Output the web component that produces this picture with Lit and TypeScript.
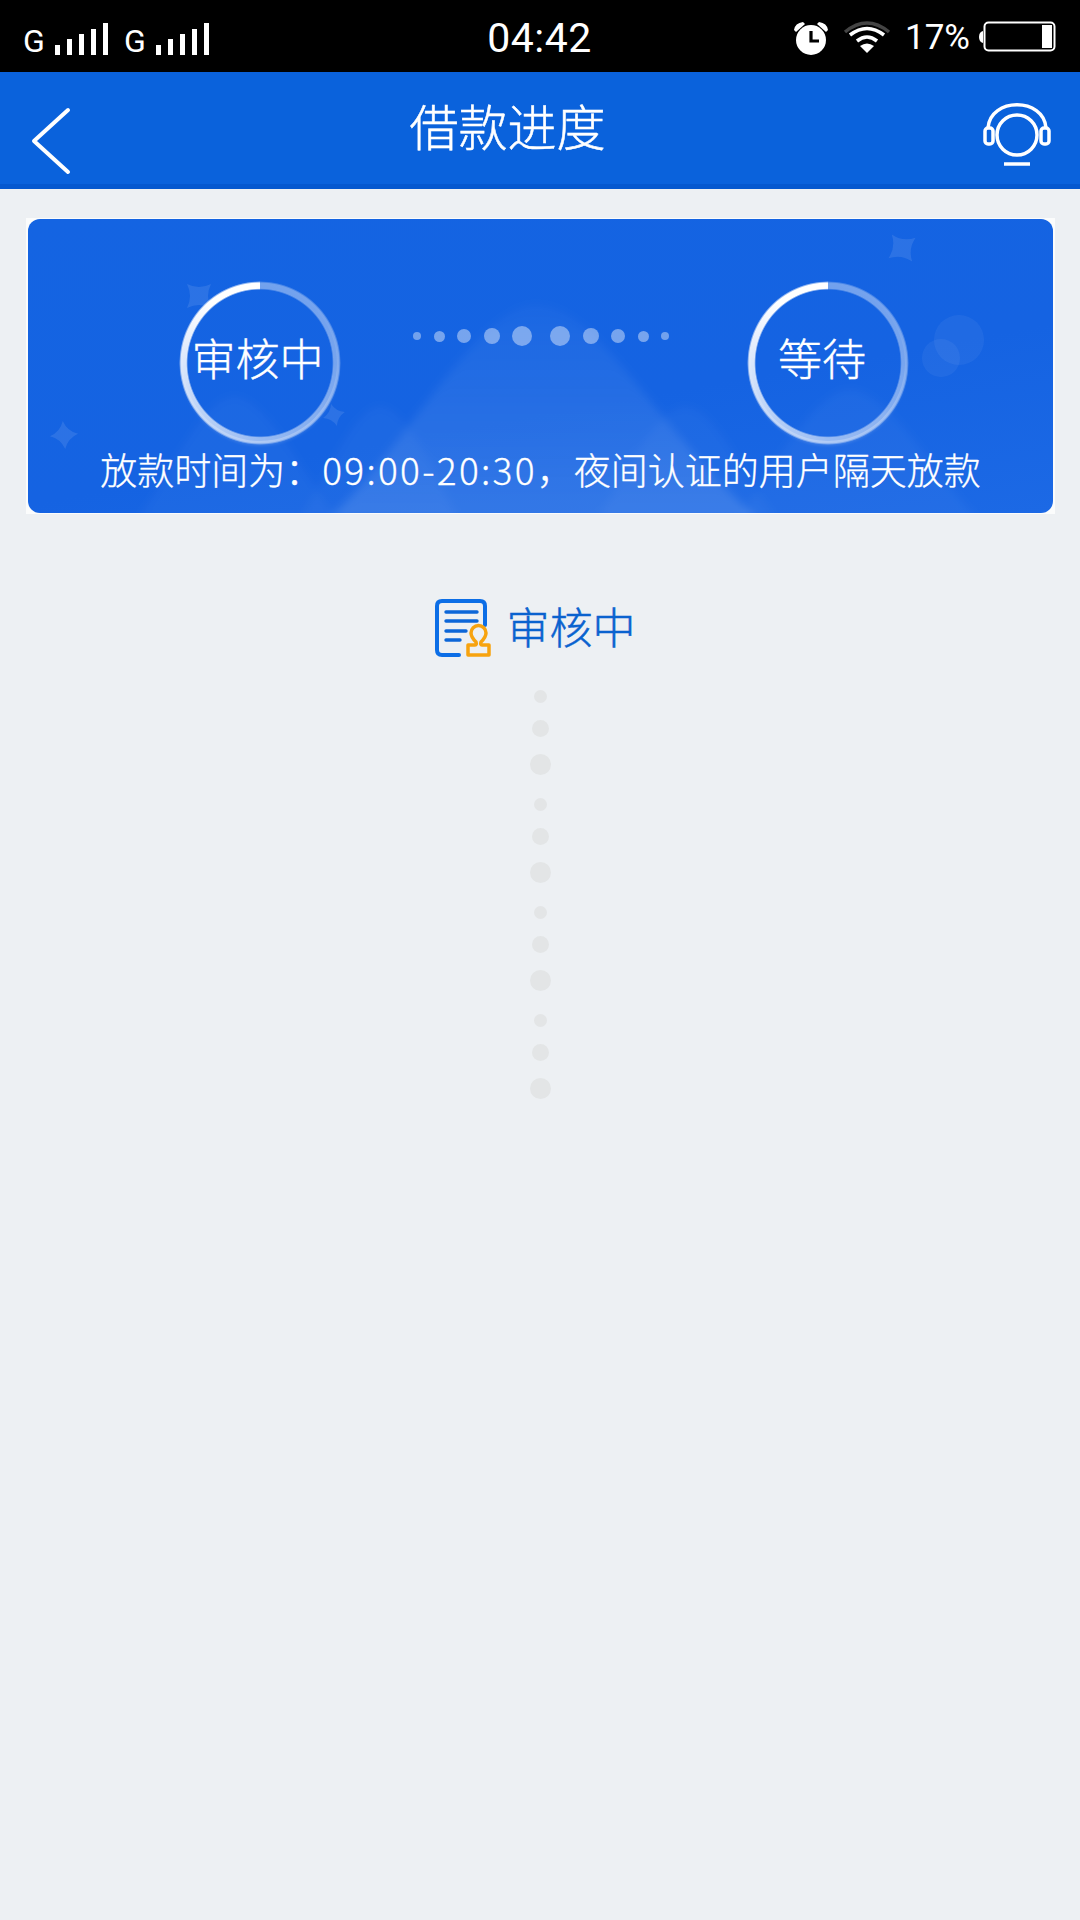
import { LitElement, html, css, svg } from "lit";
import { customElement } from "lit/decorators.js";

const star = (x: number, y: number, s: number, r = 0) => svg`
  <path transform="translate(${x} ${y}) rotate(${r}) scale(${s})"
    d="M-1 -1 Q0 -.5 1 -1 Q.5 0 1 1 Q0 .5 -1 1 Q-.5 0 -1 -1Z" fill="#fff" fill-opacity=".1"/>`;

@customElement("app-root")
export class AppRoot extends LitElement {
  static styles = css`
    :host {
      display: block;
      min-height: 1920px;
      background: #edf0f3;
      font-family: "Noto Sans CJK SC", "Noto Sans", sans-serif;
      color: #fff;
    }
    .status {
      height: 72px;
      background: #000;
      display: grid;
      grid-template-columns: 1fr auto 1fr;
      align-items: center;
      padding: 0 24px 0 23px;
      box-sizing: border-box;
      font-family: Roboto, sans-serif;
    }
    .sig-all { display: flex; gap: 16px; align-items: flex-end; height: 32px; margin-top: 3px; }
    .sig { display: flex; align-items: flex-end; gap: 10px; }
    .g { font-size: 32px; line-height: 32px; height: 30px; width: 22px; font-weight: 400; }
    .bars { display: flex; align-items: flex-end; gap: 7px; height: 32px; }
    .bars i { display: block; width: 5px; background: #fff; }
    .time { font-size: 41px; line-height: 72px; letter-spacing: .5px; margin-top: 1px; }
    .st-right { display: flex; align-items: center; justify-content: flex-end; }
    .pct { font-size: 35px; font-weight: 400; margin: 2px 8px 0 14px; line-height: 72px; }
    .st-right svg { display: block; }
    .alarm { margin-top: 2px; }
    .wifi { margin-left: 12px; }

    .nav {
      height: 117px;
      background: #0a62dc;
      border-bottom: 5px solid #0558cf;
      box-sizing: border-box;
      display: flex;
      align-items: center;
      padding: 0 29px 0 30px;
    }
    .nav svg { display: block; flex: none; }
    .back { margin-top: 26px; }
    .head { margin-top: 12px; }
    .title {
      flex: 1;
      text-align: center;
      font-size: 49px;
      line-height: 112px;
      font-weight: 300;
      -webkit-text-stroke: .5px #fff;
      padding-right: 42px;
      margin-top: -7px;
    }

    .shell {
      margin: 29px 25px 0 26px;
      padding: 1px 2px;
      background: #fbfcfc;
    }
    .card {
      position: relative;
      height: 294px;
      border-radius: 12px;
      overflow: hidden;
      background: linear-gradient(170deg, #1464e2 0%, #1563e2 60%, #1c69e5 100%);
      display: flex;
      flex-direction: column;
    }
    .deco { position: absolute; inset: 0; width: 100%; height: 100%; }
    .rings {
      position: relative;
      display: flex;
      justify-content: space-between;
      padding: 62px 144px 0 151px;
    }
    .ring {
      position: relative;
      width: 162px;
      height: 164px;
      display: flex;
      align-items: center;
      justify-content: center;
      flex: none;
    }
    .ring::before {
      content: "";
      position: absolute;
      inset: 0;
      border-radius: 50%;
      filter: blur(.5px);
      background: conic-gradient(from 0deg,
        rgba(255,255,255,.4) 0deg,
        rgba(255,255,255,.42) 90deg,
        rgba(255,255,255,.55) 180deg,
        rgba(255,255,255,.78) 250deg,
        #fff 320deg,
        #fff 360deg);
      -webkit-mask: radial-gradient(closest-side, transparent 89%, #000 91%, #000 97.5%, transparent 100%);
      mask: radial-gradient(closest-side, transparent 89%, #000 91%, #000 97.5%, transparent 100%);
    }
    .ring::after {
      content: "";
      position: absolute;
      inset: 4px;
      border-radius: 50%;
      box-shadow: 0 3px 4px rgba(255,255,255,.28);
      z-index: 0;
    }
    .ring span {
      position: relative;
      z-index: 1;
      font-size: 44px;
      line-height: 50px;
      font-weight: 300;
      -webkit-text-stroke: .4px #fff;
      margin-top: -12px;
      white-space: nowrap;
    }
    .ring.check span { margin-left: -5px; }
    .ring.wait span { margin-left: -12px; }
    .flow {
      display: flex;
      align-items: center;
      gap: 18px;
      height: 20px;
      margin-top: 45px;
      margin-left: -6px;
    }
    .flow div { display: flex; align-items: center; gap: 12.5px; }
    .flow i { display: block; border-radius: 50%; background: #fff; }
    .note {
      position: relative;
      text-align: center;
      font-size: 37px;
      line-height: 44px;
      font-weight: 300;
      -webkit-text-stroke: .3px #fff;
      margin-top: 2px;
      white-space: nowrap;
    }
    .num { letter-spacing: 2.3px; }

    .state {
      display: flex;
      align-items: center;
      justify-content: center;
      gap: 16px;
      margin-top: 84px;
      height: 58px;
      padding-right: 10px;
      color: #0a62cf;
      font-size: 43px;
      font-weight: 300;
    }
    .state svg { display: block; flex: none; margin-top: 2px; }
    .state span { margin-top: -4px; -webkit-text-stroke: .5px #0a62cf; }
    .trail {
      display: flex;
      flex-direction: column;
      align-items: center;
      gap: 23px;
      margin-top: 34px;
    }
    .trail div { display: flex; flex-direction: column; align-items: center; gap: 17px; }
    .trail i { display: block; border-radius: 50%; background: #e3e5e6; }
  `;

  private bars() {
    return [10, 16, 21, 26, 32].map((h) => html`<i style="height:${h}px"></i>`);
  }
  private dot(d: number, o: number) {
    return html`<i style="width:${d}px;height:${d}px;opacity:${o}"></i>`;
  }

  render() {
    return html`
      <div class="status">
        <div class="sig-all">
          <div class="sig"><span class="g">G</span><div class="bars">${this.bars()}</div></div>
          <div class="sig"><span class="g">G</span><div class="bars">${this.bars()}</div></div>
        </div>
        <div class="time">04:42</div>
        <div class="st-right">
          <svg class="alarm" width="40" height="40" viewBox="0 0 40 40">
            <path d="M3 12 Q4 5 12 4 L14 6 L5 14Z M37 12 Q36 5 28 4 L26 6 L35 14Z" fill="#fff"/>
            <circle cx="20" cy="22" r="15" fill="#fff"/>
            <path d="M20 13 V23 H28" stroke="#000" stroke-width="3.2" fill="none"/>
          </svg>
          <svg class="wifi" width="48" height="34" viewBox="0 0 48 34">
            <path d="M2 12 Q24 -6 46 12" stroke="#444" stroke-width="3.5" fill="none"/>
            <path d="M7 15 Q24 2 41 15" stroke="#fff" stroke-width="3.6" fill="none"/>
            <path d="M14 21 Q24 13 34 21" stroke="#fff" stroke-width="3.6" fill="none"/>
            <path d="M17 26 Q24 21 31 26 L24 33Z" fill="#fff"/>
          </svg>
          <span class="pct">17%</span>
          <svg width="78" height="32" viewBox="0 0 78 32">
            <path d="M5 10 Q1 11 1 16 Q1 21 5 22Z" fill="#fff"/>
            <rect x="6.5" y="1.5" width="70" height="28" rx="4" fill="none" stroke="#fff" stroke-width="2"/>
            <rect x="64" y="4" width="10" height="23" fill="#fff"/>
          </svg>
        </div>
      </div>

      <div class="nav">
        <svg class="back" width="44" height="68" viewBox="0 0 44 68">
          <path d="M38 3 L4 34 L38 65" fill="none" stroke="#fff" stroke-width="4" stroke-linecap="round" stroke-linejoin="round"/>
        </svg>
        <div class="title">借款进度</div>
        <svg class="head" width="68" height="68" viewBox="0 0 68 68" fill="none" stroke="#fff" stroke-width="3.5">
          <path d="M5 28 C7 -3 61 -3 63 28"/>
          <circle cx="34" cy="35" r="20"/>
          <rect x="2" y="28" width="8" height="16" rx="3"/>
          <rect x="58" y="28" width="8" height="16" rx="3"/>
          <path d="M21 64 H47"/>
        </svg>
      </div>

      <div class="shell">
        <div class="card">
          <svg class="deco" viewBox="0 0 1025 294" preserveAspectRatio="none">
            <defs>
              <linearGradient id="m" x1="0" y1="0" x2="0" y2="1">
                <stop offset="0" stop-color="#fff" stop-opacity=".025"/>
                <stop offset="1" stop-color="#fff" stop-opacity=".12"/>
              </linearGradient>
              <filter id="b" x="-5%" y="-5%" width="110%" height="110%"><feGaussianBlur stdDeviation="4"/></filter>
            </defs>
            <g filter="url(#b)">
              <path d="M300 300 C370 240 450 86 507 86 C570 86 620 200 730 300Z" fill="url(#m)"/>
              <path d="M270 300 C300 260 325 188 352 188 C380 188 410 260 430 300Z" fill="#fff" fill-opacity=".03"/>
              <path d="M110 300 C140 260 175 178 206 178 C240 178 280 265 310 300Z" fill="#fff" fill-opacity=".03"/>
              <path d="M570 300 C600 250 630 188 657 188 C690 188 720 270 750 300Z" fill="#fff" fill-opacity=".03"/>
              <path d="M710 300 C750 240 790 171 822 171 C860 171 910 260 950 300Z" fill="#fff" fill-opacity=".035"/>
            </g>
            ${star(171, 77, 12)}
            ${star(36, 216, 10, 40)}
            ${star(306, 196, 8, 30)}
            ${star(874, 29, 12, 8)}
            <circle cx="931" cy="121" r="25" fill="#fff" fill-opacity=".05"/>
            <circle cx="913" cy="139" r="19" fill="#fff" fill-opacity=".05"/>
          </svg>
          <div class="rings">
            <div class="ring check"><span>审核中</span></div>
            <div class="flow">
              <div>${this.dot(8, .4)}${this.dot(11, .42)}${this.dot(14, .42)}${this.dot(16, .42)}${this.dot(20, .42)}</div>
              <div>${this.dot(20, .42)}${this.dot(16, .42)}${this.dot(14, .42)}${this.dot(11, .42)}${this.dot(8, .4)}</div>
            </div>
            <div class="ring wait"><span>等待</span></div>
          </div>
          <div class="note">放款时间为：<span class="num">09:00-20:30</span>，夜间认证的用户隔天放款</div>
        </div>
      </div>

      <div class="state">
        <svg width="56" height="58" viewBox="0 0 56 58" fill="none">
          <path d="M24 56 H7 Q2 56 2 51 V7 Q2 2 7 2 H45 Q50 2 50 7 V26" stroke="#0c6ee6" stroke-width="4" stroke-linecap="round"/>
          <path d="M11 13 H42 M11 22 H42 M11 32 H31 M11 41 H25" stroke="#0c66d8" stroke-width="3.4" stroke-linecap="round"/>
          <path d="M33 46 H40 Q42 46 41 43 Q36 38 36 34 A7.5 7.5 0 0 1 51 34 Q51 38 46 43 Q45 46 47 46 H54 V56 H33Z" stroke="#f7a30f" stroke-width="3.5" stroke-linejoin="round"/>
        </svg>
        <span>审核中</span>
      </div>

      <div class="trail">
        ${[0, 1, 2, 3].map(
          () => html`<div>
            <i style="width:13px;height:13px"></i>
            <i style="width:17px;height:17px"></i>
            <i style="width:21px;height:21px"></i>
          </div>`
        )}
      </div>
    `;
  }
}
